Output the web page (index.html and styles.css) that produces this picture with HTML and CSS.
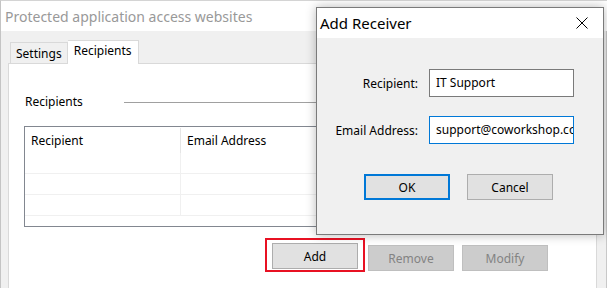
FILE: index.html
```html
<!DOCTYPE html>
<html lang="en">
<head>
    <meta charset="UTF-8">
    <meta name="viewport" content="width=device-width, initial-scale=1.0">
    <title>Add Receiver</title>
    <link rel="stylesheet" href="styles.css">
</head>
<body>
<div class="window">
    <div class="titlebar">Protected application access websites</div>
    <div class="window-body">
        <div class="tabs">
            <div class="tab">Settings</div>
            <div class="tab active">Recipients</div>
        </div>
        <div class="panel">
            <div class="group">
                <span class="group-label">Recipients</span>
                <span class="group-line"></span>
            </div>

            <div class="list">
                <div class="list-head">
                    <div class="cell first">Recipient</div>
                    <div class="cell">Email Address</div>
                </div>
                <div class="list-row"><div class="cell first"></div><div class="cell"></div></div>
                <div class="list-row"><div class="cell first"></div><div class="cell"></div></div>
                <div class="list-row"><div class="cell first"></div><div class="cell"></div></div>
            </div>

            <div class="actions">
                <span class="highlight"><button class="btn">Add</button></span>
                <button class="btn" disabled>Remove</button>
                <button class="btn modify" disabled>Modify</button>
            </div>
        </div>
    </div>
</div>

<div class="dialog">
    <div class="dialog-title">
        <span>Add Receiver</span>
        <svg class="close" width="12" height="12" viewBox="0 0 12 12">
            <path d="M0.5 0.5 L11.5 11.5 M11.5 0.5 L0.5 11.5" stroke="#000" stroke-width="1" fill="none"/>
        </svg>
    </div>
    <div class="dialog-body">
        <div class="form">
            <label class="field-label">Recipient:</label>
            <div class="input">IT Support</div>
            <label class="field-label">Email Address:</label>
            <div class="input focused"><span class="input-text">support@coworkshop.co</span></div>
        </div>
        <div class="dialog-buttons">
            <button class="btn default">OK</button>
            <button class="btn">Cancel</button>
        </div>
    </div>
</div>
</body>
</html>
```

FILE: styles.css
```css
body {
    margin: 0;
    width: 607px;
    height: 288px;
    overflow: hidden;
    font-family: "Noto Sans", sans-serif;
    font-size: 12px;
    color: #000;
    background-color: #f0f0f0;
    position: relative;
}

.window {
    height: 288px;
    border-left: 1px solid #c4c4c4;
    border-top: 1px solid #d4d4d4;
    box-sizing: border-box;
    overflow: hidden;
}

.titlebar {
    height: 30px;
    background-color: #fff;
    color: #999;
    font-size: 14px;
    line-height: 32px;
    padding-left: 4px;
}

.window-body {
    background-color: #f0f0f0;
    padding: 9px 9px 0 7px;
    border-right: 1px solid #c8c8c8;
    height: 257px;
    box-sizing: border-box;
}

.tabs {
    display: flex;
    align-items: flex-end;
    padding-left: 2px;
    height: 23px;
}

.tab {
    border: 1px solid #d9d9d9;
    border-bottom: none;
    background-color: #f0f0f0;
    height: 20px;
    line-height: 22px;
    padding: 0 5px 0 5px;
}

.tab.active {
    background-color: #fff;
    height: 23px;
    line-height: 20px;
    padding: 0 6px;
    margin-bottom: -1px;
    position: relative;
    z-index: 1;
    border-left: none;
}

.panel {
    background-color: #fff;
    border: 1px solid #d9d9d9;
    border-bottom: none;
    height: 224px;
    padding: 0 15px;
}

.group {
    display: flex;
    align-items: center;
    height: 18px;
    margin-top: 28px;
    padding-left: 1px;
}

.group-label {
    width: 99px;
}

.group-line {
    flex: 1;
    height: 1px;
    background-color: #a0a0a0;
    margin-top: 3px;
}

.list {
    margin-top: 16px;
    width: 560px;
    height: 99px;
    border: 1px solid #828790;
}

.list-head {
    display: flex;
    height: 26px;
}

.list-head .cell {
    line-height: 28px;
    padding-left: 6px;
}

.list-head .cell.first {
    border-right: 1px solid #e5e5e5;
    margin-top: 1px;
    line-height: 26px;
}

.cell {
    box-sizing: border-box;
}

.cell.first {
    width: 156px;
}

.list-row {
    display: flex;
    height: 20px;
    border-bottom: 1px solid #f0f0f0;
}

.list-row .cell.first {
    border-right: 1px solid #f0f0f0;
}

.actions {
    display: flex;
    align-items: flex-end;
    margin-top: 11px;
    padding-left: 241px;
}

.highlight {
    display: inline-flex;
    border: 2px solid #e81123;
    padding: 3px 5px 1px 5px;
    margin-right: 3px;
}

.btn {
    font-family: "Noto Sans", sans-serif;
    font-size: 12px;
    width: 86px;
    height: 26px;
    background-color: #e1e1e1;
    border: 1px solid #adadad;
    color: #000;
    padding: 0;
    margin: 0;
}

.btn:disabled {
    background-color: #cccccc;
    border-color: #bfbfbf;
    color: #838383;
    margin-bottom: 1px;
}

.btn.modify {
    margin-left: 8px;
}

.dialog {
    position: absolute;
    left: 316px;
    top: 7px;
    width: 288px;
    height: 228px;
    box-sizing: border-box;
    border: 1px solid #7a7a7a;
    background-color: #f0f0f0;
    box-shadow: 0 0 10px rgba(0, 0, 0, 0.28);
    z-index: 5;
}

.dialog-title {
    height: 30px;
    background-color: #fff;
    display: flex;
    align-items: center;
    justify-content: space-between;
    font-size: 15px;
    padding: 0 15px 0 3px;
}

.close {
    display: block;
}

.dialog-body {
    padding-top: 31px;
}

.form {
    display: grid;
    grid-template-columns: 101px 145px;
    column-gap: 11px;
    row-gap: 19px;
    align-items: center;
}

.field-label {
    text-align: right;
}

.input {
    height: 28px;
    box-sizing: border-box;
    border: 1px solid #7a7a7a;
    background-color: #fff;
    line-height: 25px;
    padding-left: 6px;
    white-space: nowrap;
    overflow: hidden;
}

.input.focused {
    border-color: #0078d7;
}

.input-text {
    display: inline-block;
    width: 137px;
    overflow: hidden;
    vertical-align: top;
}

.dialog-buttons {
    display: flex;
    gap: 17px;
    margin-top: 30px;
    padding-left: 47px;
}

.btn.default {
    border: 2px solid #0078d7;
}
```
